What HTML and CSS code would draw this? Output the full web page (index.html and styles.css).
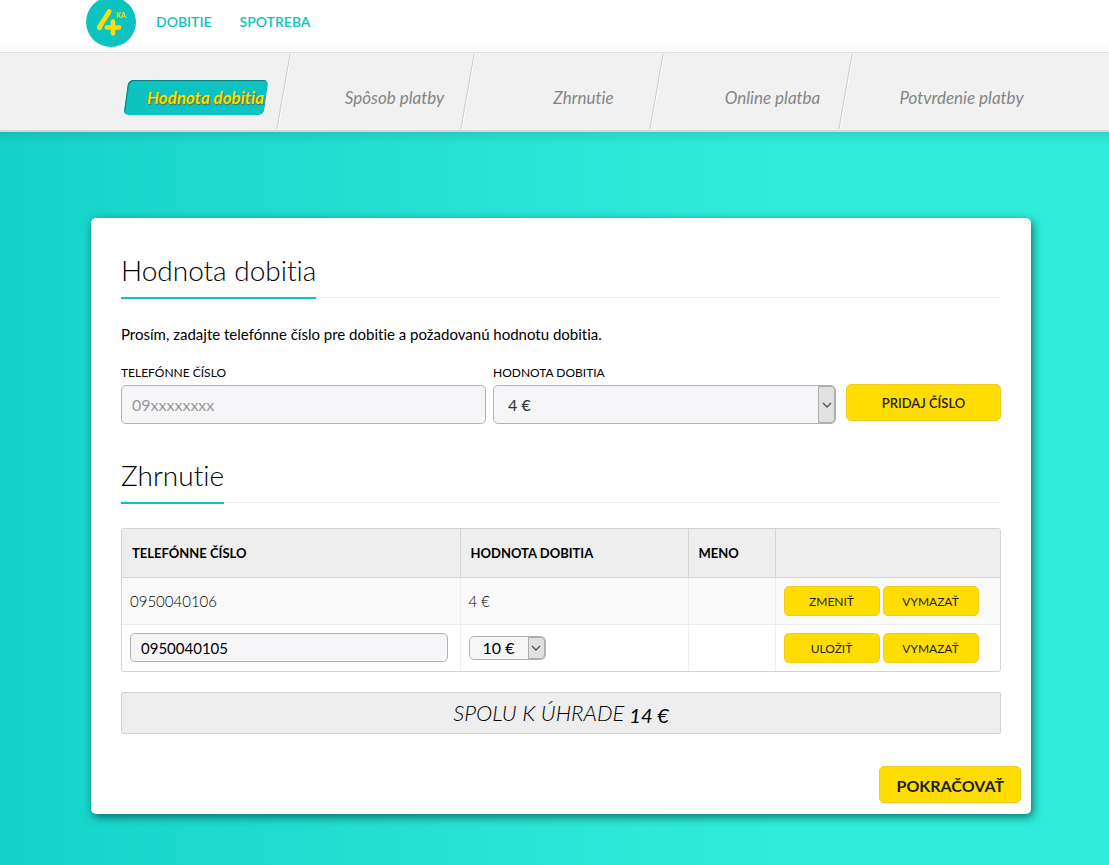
FILE: index.html
```html
<!DOCTYPE html>
<html lang="sk">
<head>
<meta charset="utf-8">
<meta name="viewport" content="width=device-width, initial-scale=1">
<title>Hodnota dobitia</title>
<link rel="stylesheet" href="styles.css">
</head>
<body>
<header class="topbar">
  <div class="topbar-inner">
    <a class="logo" href="#" aria-label="4ka">
      <svg width="50" height="50" viewBox="0 0 50 50">
        <circle cx="25" cy="25" r="25" fill="#0cc3c1"/>
        <g stroke="#ffdd00" stroke-width="4.6" stroke-linecap="round" fill="none">
          <path d="M23.3 14.5L13.5 30" stroke-width="4.8"/>
          <path d="M20.8 30.5H33.2M27 24.5V36.5"/>
        </g>
        <path d="M11.2 29.5V32.8H15.4L16.6 29z" fill="#ffdd00"/>
        <text class="logo-text" x="30" y="21">KA</text>
      </svg>
    </a>
    <nav class="topnav">
      <a href="#">DOBITIE</a>
      <a href="#">SPOTREBA</a>
    </nav>
  </div>
</header>

<nav class="steps-bar" aria-label="Kroky">
  <ol class="steps">
    <li class="step step-active"><span>Hodnota dobitia</span></li>
    <li class="step"><span>Spôsob platby</span></li>
    <li class="step"><span>Zhrnutie</span></li>
    <li class="step"><span>Online platba</span></li>
    <li class="step"><span>Potvrdenie platby</span></li>
  </ol>
</nav>

<main class="page">
  <div class="card">
    <h2 class="heading"><span>Hodnota dobitia</span></h2>
    <p class="intro">Prosím, zadajte telefónne číslo pre dobitie a požadovanú hodnotu dobitia.</p>
    <form class="add-form">
      <div class="field">
        <label for="phone">TELEFÓNNE ČÍSLO</label>
        <input class="input" id="phone" type="text" placeholder="09xxxxxxxx">
      </div>
      <div class="field">
        <label for="amount">HODNOTA DOBITIA</label>
        <div class="select">
          <select id="amount"><option>4 €</option><option>10 €</option></select>
          <span class="select-arrow"><svg width="10" height="6" viewBox="0 0 10 6"><path d="M1 1L5 5L9 1"/></svg></span>
        </div>
      </div>
      <button class="btn btn-add" type="button">PRIDAJ ČÍSLO</button>
    </form>

    <h2 class="heading"><span>Zhrnutie</span></h2>
    <div class="table-box">
      <table class="summary">
        <colgroup><col class="col-phone"><col class="col-amount"><col class="col-name"><col></colgroup>
        <thead>
          <tr><th>TELEFÓNNE ČÍSLO</th><th>HODNOTA DOBITIA</th><th>MENO</th><th></th></tr>
        </thead>
        <tbody>
          <tr>
            <td>0950040106</td>
            <td>4 €</td>
            <td></td>
            <td><div class="actions"><button class="btn btn-small" type="button">ZMENIŤ</button><button class="btn btn-small" type="button">VYMAZAŤ</button></div></td>
          </tr>
          <tr>
            <td><input class="input input-small" type="text" value="0950040105" aria-label="Telefónne číslo"></td>
            <td>
              <div class="select select-small">
                <select aria-label="Hodnota dobitia"><option>10 €</option><option>4 €</option></select>
                <span class="select-arrow"><svg width="10" height="6" viewBox="0 0 10 6"><path d="M1 1L5 5L9 1"/></svg></span>
              </div>
            </td>
            <td></td>
            <td><div class="actions"><button class="btn btn-small" type="button">ULOŽIŤ</button><button class="btn btn-small" type="button">VYMAZAŤ</button></div></td>
          </tr>
        </tbody>
      </table>
    </div>

    <div class="total"><span>SPOLU K ÚHRADE</span><strong>14 €</strong></div>
    <div class="footer"><button class="btn btn-next" type="button">POKRAČOVAŤ</button></div>
  </div>
</main>
</body>
</html>
```
FILE: styles.css
```css
* { box-sizing: border-box; }

html { height: 100%; }

body {
  margin: 0;
  min-height: 100%;
  display: flex;
  flex-direction: column;
  font-family: Lato, "Liberation Sans", sans-serif;
  font-size: 15px;
  font-variant-ligatures: none;
  color: #000;
}

.topbar {
  height: 53px;
  padding-left: 13px;
  background: linear-gradient(#fff 44px, #f8f8f8 52px);
  border-bottom: 1px solid #e0e0e0;
}

.topbar-inner {
  display: flex;
  align-items: center;
  gap: 20px;
  max-width: 950px;
  height: 44px;
  margin: 0 auto;
}

.logo { display: block; height: 50px; }
.logo-text { font-size: 7px; font-weight: 700; fill: #ffdd00; }

.topnav { display: flex; gap: 28px; }
.topnav a {
  color: #0cc3c1;
  font-size: 14px;
  font-weight: 600;
  line-height: 18px;
  padding-bottom: 1px;
  text-decoration: none;
}

.steps-bar {
  padding-left: 58px;
  background: #f1f1f1;
  border-bottom: 2px solid #d6d6d6;
}

.steps {
  display: grid;
  grid-template-columns: repeat(5, 1fr);
  max-width: 945px;
  margin: 0 auto;
  padding: 0;
  list-style: none;
}

.step {
  position: relative;
  height: 77px;
  padding-top: 11px;
  display: flex;
  align-items: center;
  justify-content: center;
  color: #858585;
  font-size: 17px;
  font-style: italic;
}

.step:not(:last-child)::after {
  content: "";
  position: absolute;
  top: 1px;
  bottom: 1px;
  right: 20px;
  border-left: 1px solid #cbcbcb;
  border-right: 1px solid #fff;
  transform: skewX(-10deg);
}

.step-active {
  color: #ffdd00;
  font-weight: 700;
  text-shadow: 1px 1px 1px #44705a;
}
.step-active:not(:last-child)::after { right: 15px; }
.step-active span { position: relative; z-index: 1; }

.step-active::before {
  content: "";
  position: absolute;
  left: 15px;
  right: 34px;
  top: 27px;
  height: 35px;
  border-radius: 5px;
  background: #0cc3c1;
  box-shadow: inset 1px 1px 1px #067d7b, 1px 1px 1px #fff;
  transform: skewX(-8deg);
}

.page {
  flex: 1;
  padding: 86px 0 50px 13px;
  background:
    linear-gradient(rgba(0, 60, 60, .12), transparent 12px),
    linear-gradient(90deg, #13d2c9, #1edacf 20%, #29e4d4 46%, #2fecda 70%, #2fecda);
}

.card {
  max-width: 940px;
  margin: 0 auto;
  padding: 35px 30px 11px;
  background: #fff;
  border-radius: 5px;
  box-shadow: 2px 3px 10px rgba(0, 60, 60, .7);
}

.heading {
  display: flex;
  margin: 0;
  font-size: 28px;
  font-weight: 300;
  line-height: 34px;
  background: linear-gradient(#ececf0, #ececf0) 0 44px / 100% 1px no-repeat;
}
.heading span { padding-bottom: 10px; border-bottom: 2px solid #0cc3c1; }

.intro { margin: 25px 0 21px; line-height: 20px; }

.add-form {
  display: grid;
  grid-template-columns: 365fr 343fr 158fr;
  align-items: end;
  margin-bottom: 34px;
  column-gap: 7px;
}

.field label { display: block; font-size: 12px; line-height: 16px; margin-bottom: 4px; }

.input, .select select {
  display: block;
  width: 100%;
  height: 39px;
  border: 1px solid #b2b2b2;
  border-radius: 5px;
  background: #f6f6f8;
  color: #333;
  font: inherit;
  font-size: 16px;
  font-weight: 400;
  padding: 0 10px;
}
.input::placeholder { color: #999; opacity: 1; }

.select { position: relative; }
.select select { appearance: none; padding-left: 14px; color: #333; }

.select-arrow {
  position: absolute;
  top: 1px;
  right: 1px;
  bottom: 1px;
  width: 17px;
  display: flex;
  align-items: center;
  justify-content: center;
  background: #e1e1e1;
  border: 1px solid #adadad;
  border-radius: 0 4px 4px 0;
  pointer-events: none;
}
.select-arrow path { fill: none; stroke: #505050; stroke-width: 1.3; }

.btn {
  border: 1px solid #f0cc20;
  border-radius: 5px;
  background: #ffdd00;
  color: #1d1d1d;
  font: inherit;
  font-weight: 400;
  padding: 0;
  cursor: pointer;
}
.btn-add { height: 37px; margin: 0 0 3px 3px; font-size: 13px; font-weight: 600; }
.btn-small { width: 96px; height: 30px; padding-top: 2px; font-size: 12px; }
.btn-next { height: 37px; padding: 2px 16px 0; font-size: 16px; font-weight: 700; }

.table-box {
  margin-top: 24px;
  border: 1px solid #d3d3d3;
  border-radius: 3px;
  overflow: hidden;
}

.summary { width: 100%; border-collapse: collapse; table-layout: fixed; }
.col-phone { width: 338px; }
.col-amount { width: 228px; }
.col-name { width: 87px; }

.summary th {
  height: 48px;
  padding: 0 10px;
  background: #eee;
  border-bottom: 1px solid #d3d3d3;
  text-align: left;
  font-size: 13px;
  font-weight: 700;
}
.summary td { height: 47px; padding: 0 8px; border-top: 1px solid #eee; font-weight: 300; }
.summary th + th { border-left: 1px solid #d3d3d3; }
.summary td + td { border-left: 1px solid #eee; }
.summary tbody tr:first-child { background: #f9f9f9; }

.summary .input-small { width: 318px; max-width: 100%; height: 29px; font-size: 15px; color: #000; }
.select-small { width: 77px; }
.select-small select { height: 24px; color: #000; padding: 0 0 0 13px; }

.actions { display: flex; gap: 3px; }

.total {
  display: flex;
  align-items: center;
  justify-content: center;
  gap: 5px;
  height: 42px;
  margin-top: 20px;
  background: #eee;
  border: 1px solid #d3d3d3;
  border-radius: 2px;
  font-size: 22px;
  font-style: italic;
  font-weight: 300;
}
.total span { padding-bottom: 2px; }
.total strong { font-size: 20px; font-weight: 400; padding-top: 4px; }

.footer { display: flex; justify-content: flex-end; margin: 32px -20px 0 0; }
```
